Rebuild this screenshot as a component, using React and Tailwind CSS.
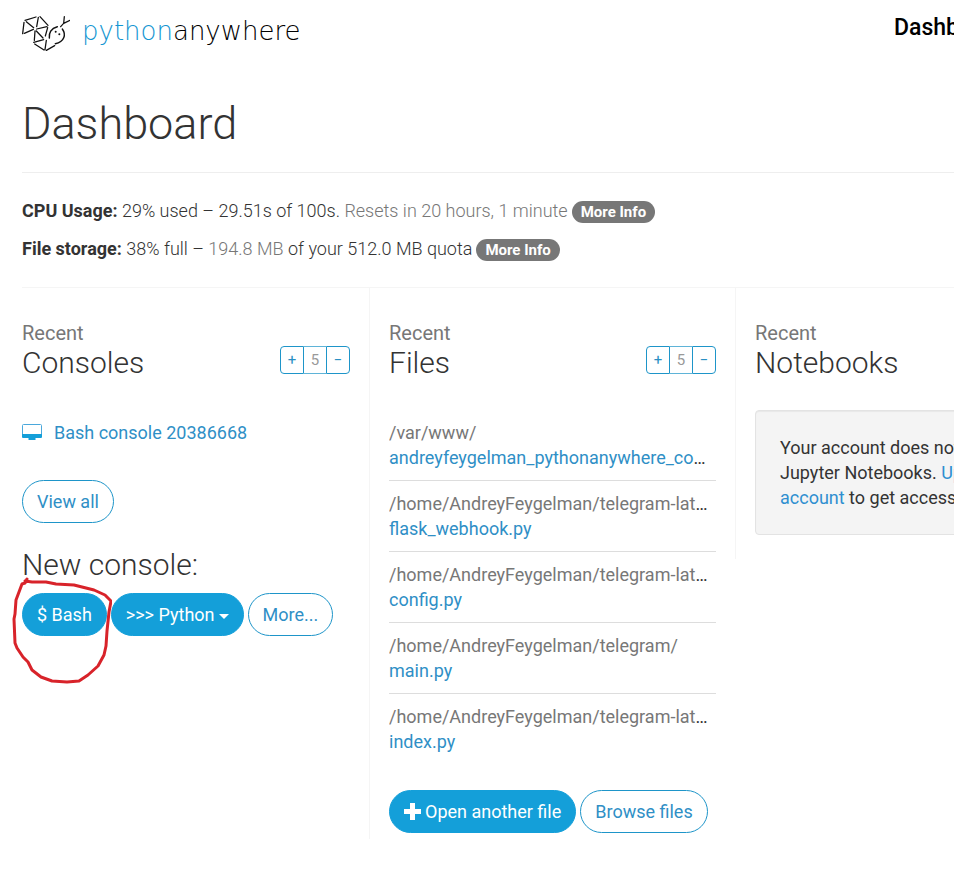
import React from 'react';

const files = [
  { dir: '/var/www/', name: 'andreyfeygelman_pythonanywhere_com_wsgi.py' },
  { dir: '/home/AndreyFeygelman/telegram-lathe/', name: 'flask_webhook.py' },
  { dir: '/home/AndreyFeygelman/telegram-lathe/', name: 'config.py' },
  { dir: '/home/AndreyFeygelman/telegram/', name: 'main.py' },
  { dir: '/home/AndreyFeygelman/telegram-lathe/', name: 'index.py' },
];

function Logo() {
  return (
    <a href="#home" className="flex items-center gap-3">
      <svg width="48" height="38" viewBox="21 12 144 114" fill="none" stroke="#111" strokeWidth="3.8" strokeLinecap="round" aria-hidden="true">
        <path d="M30 31L63 21M27 37L23 71M34 35L56 53M28 70L55 58M70 22L65 50M75 20L99 46M65 57L96 50M60 63L58 91M64 63L84 84M98 53L91 78M56 97L86 89M59 102L87 120M94 91L90 119M94 121L119 107" />
        <path d="M103 84C101 70 108 55 127 50M142 57C154 74 148 96 121 101" strokeWidth="4.4" />
        <path d="M137 50L146 40L148 20M146 40L165 31" />
        <circle cx="122" cy="65" r="3" fill="#111" stroke="none" />
        <circle cx="133" cy="73" r="3" fill="#111" stroke="none" />
      </svg>
      <span className="pb-1 font-['DejaVu_Sans',sans-serif] text-[26px] font-extralight text-black">
        <span className="text-[#1496d2]">python</span>anywhere
      </span>
    </a>
  );
}

function Heading({ title, counter }) {
  return (
    <div className="flex items-end justify-between">
      <h2 className="text-[30px] leading-[34px] font-light">
        <small className="block text-xl leading-[26px] font-normal text-[#777]">Recent</small>
        {title}
      </h2>
      {counter && (
        <div className="mb-1.5 flex h-7 text-[15px] leading-[26px]">
          <button className="w-6 rounded-l border border-[#1e95c9] text-[#2a8fc4]">+</button>
          <span className="w-[22px] border-y border-[#5fb4d8] text-center text-[#999]">5</span>
          <button className="w-6 rounded-r border border-[#1e95c9] text-[#2a8fc4]">−</button>
        </div>
      )}
    </div>
  );
}

function Pill({ solid, children }) {
  return (
    <button
      className={
        solid
          ? 'flex h-[43px] items-center rounded-full border border-[#149fd9] bg-[#149fd9] px-3.5 whitespace-nowrap text-white'
          : 'flex h-[43px] items-center rounded-full border border-[#1e95c9] bg-white px-3.5 whitespace-nowrap text-[#2f8fc6]'
      }
    >
      {children}
    </button>
  );
}

function Info() {
  return (
    <button className="mt-0.5 ml-1 h-[22px] rounded-full bg-[#777] px-[9px] text-[15px] leading-[22px] font-bold text-white">More Info</button>
  );
}

function Annotation() {
  return (
    <svg className="pointer-events-none absolute -top-4 -left-2.5" width="100" height="110" viewBox="0 0 100 110" fill="none" stroke="#d8232a" strokeWidth="3" strokeLinecap="round" strokeLinejoin="round" aria-hidden="true">
      <path d="M15 2L13 6L10 7L7 15L4 23L3 37L2 42L3 66L5 71L11 80L16 85L20 93L29 100L40 104L55 105L67 104L76 98L86 89L92 78L94 69L95 54L97 35L99 24L93 18L82 13L70 10L62 8L44 7L34 5L20 5L13 4" />
    </svg>
  );
}

export default function App() {
  return (
    <div className="min-h-screen overflow-hidden bg-white font-['Roboto',sans-serif] text-lg leading-[25px] text-[#333]">
      <div className="min-w-[1470px] px-[3px]">
        <header className="flex items-start px-[19px] pt-3.5">
          <Logo />
          <nav className="ml-auto w-[554px]">
            <a href="#dashboard" className="text-[23px] leading-7 font-medium text-black">Dashboard</a>
          </nav>
        </header>
        <main>
          <div className="px-[19px]">
            <h1 className="mt-11 border-b border-[#eee] pb-5 text-[45px] leading-[56px] font-light">Dashboard</h1>
            <div className="space-y-[13px] border-b border-[#f5f5f5] pt-[25px] pb-[26px] font-light">
              <p className="flex items-center whitespace-pre">
                <b className="font-bold">CPU Usage:</b> 29% used – 29.51s of 100s. <span className="text-[#777]">Resets in 20 hours, 1 minute</span>
                <Info />
              </p>
              <p className="flex items-center whitespace-pre">
                <b className="font-bold">File storage:</b> 38% full – <span className="text-[#777]">194.8 MB</span> of your 512.0 MB quota
                <Info />
              </p>
            </div>
          </div>
          <div className="grid grid-cols-4 items-start">
            <section className="px-[19px] pt-8">
              <Heading title="Consoles" counter />
              <a href="#console" className="mt-10 flex items-center gap-3 text-[#2f8fc6]">
                <svg width="20" height="17" viewBox="0 0 20 17" aria-hidden="true">
                  <rect x="0.5" y="0.5" width="19" height="12" rx="1" fill="white" stroke="#4aa8dc" />
                  <path d="M0 10h20v3q0 1-1 1h-5.500v2h-7v-2H1q-1 0-1-1z" fill="#149fd9" />
                </svg>
                Bash console 20386668
              </a>
              <div className="mt-[35px] flex"><Pill>View all</Pill></div>
              <h3 className="mt-[25px] text-[30px] leading-[34px] font-light">New console:</h3>
              <div className="mt-[11px] flex gap-1">
                <div className="relative">
                  <Pill solid>$ Bash</Pill>
                  <Annotation />
                </div>
                <Pill solid>
                  &gt;&gt;&gt; Python
                  <svg className="mt-1 ml-1" width="10" height="5" viewBox="0 0 10 5" aria-hidden="true"><path d="M0 0h10L5 5z" fill="white" /></svg>
                </Pill>
                <Pill>More...</Pill>
              </div>
            </section>
            <section className="h-[551px] border-l border-[#f5f5f5] px-[19px] pt-8">
              <Heading title="Files" counter />
              <ul className="mt-[30px] divide-y divide-[#ddd]">
                {files.map((file, i) => (
                  <li key={i} className="py-2.5">
                    <div className="truncate pr-1"><span className="text-[#777]">{file.dir}</span></div>
                    <div className="truncate pr-1"><a href="#file" className="text-[#2f8fc6]">{file.name}</a></div>
                  </li>
                ))}
              </ul>
              <div className="mt-[26px] flex gap-1">
                <Pill solid>
                  <svg className="mr-1" width="17" height="17" viewBox="0 0 17 17" aria-hidden="true"><path d="M6 0h5v6h6v5h-6v6H6v-6H0V6h6z" fill="white" /></svg>
                  Open another file
                </Pill>
                <Pill>Browse files</Pill>
              </div>
            </section>
            <section className="h-[271px] border-l border-[#f5f5f5] px-[19px] pt-8">
              <Heading title="Notebooks" />
              <p className="mt-[30px] rounded border border-[#e3e3e3] bg-[#f4f4f4] p-6 shadow-[inset_0_1px_1px_rgba(0,0,0,0.05)]">
                Your account does not support Jupyter Notebooks. <a href="#upgrade" className="text-[#2f8fd0]">Upgrade your account</a> to get access!
              </p>
            </section>
          </div>
        </main>
      </div>
    </div>
  );
}
